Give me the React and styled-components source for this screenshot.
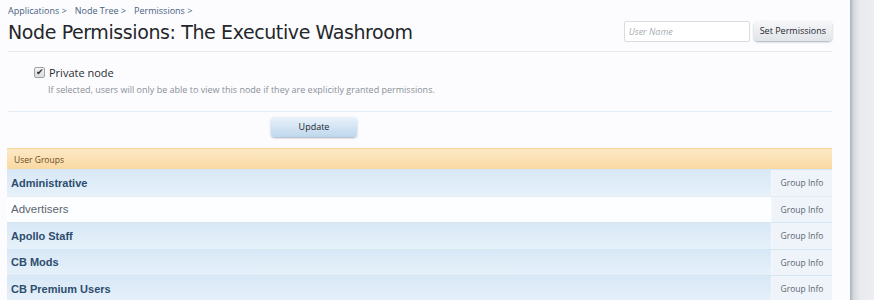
import React from 'react'
import styled, { createGlobalStyle } from 'styled-components'

const GlobalStyle = createGlobalStyle`
    body {
        margin: 0;
        background: #eceef1;
        font-family: "Open Sans", "Liberation Sans", sans-serif;
    }
`

const Page = styled.div`
    display: flex;
    width: 874px;
    height: 300px;
    overflow: hidden;
`

const Panel = styled.div`
    width: 824px;
    padding: 0 18px 0 8px;
    background: #fcfcfe;
`

const Side = styled.div`
    flex: 1;
    background: linear-gradient(to right, #a9b2bc 0px, #d6dbe0 4px, #e8eaed 10px, #eceef1 24px);
`

const Breadcrumb = styled.div`
    display: flex;
    gap: 8px;
    padding-top: 4px;
    font-size: 9px;
    color: #47617f;
    height: 14px;
`

const Header = styled.div`
    display: flex;
    justify-content: space-between;
    align-items: flex-start;
    border-bottom: 1px solid #e6e9ee;
    height: 33px;
`

const Title = styled.h1`
    margin: 3px 0 0;
    font-family: "DejaVu Sans", sans-serif;
    font-weight: normal;
    font-size: 19px;
    letter-spacing: -0.4px;
    color: #23272b;
`

const SearchForm = styled.div`
    display: flex;
    gap: 4px;
    margin-top: 3px;
`

const TextInput = styled.div`
    width: 120px;
    height: 19px;
    border: 1px solid #d8dde3;
    border-radius: 2px;
    background: #fff;
    font-size: 9px;
    font-style: italic;
    color: #a7adb5;
    padding-left: 4px;
    line-height: 19px;
`

const Button = styled.div`
    height: 20px;
    line-height: 20px;
    padding: 0 ${p => p.$pad || 6}px;
    width: ${p => p.$width || 'auto'};
    text-align: center;
    font-size: 9px;
    color: #1f2630;
    border-radius: 4px;
    background: ${p => p.$blue
        ? 'linear-gradient(to bottom, #e9f2fb, #bfd7ec)'
        : 'linear-gradient(to bottom, #f6f7f9, #e1e4e8)'};
    box-shadow: 0 1px 2px rgba(60, 80, 110, 0.45);
`

const OptionBlock = styled.div`
    padding: 13px 0 0 26px;
    height: 46px;
    border-bottom: 1px solid #e4eef6;
`

const CheckRow = styled.label`
    display: flex;
    align-items: center;
    gap: 4px;
    font-size: 11px;
    color: #2a2e33;
`

const Check = styled.span`
    position: relative;
    width: 9px;
    height: 9px;
    border: 1px solid #9ea3aa;
    border-radius: 2px;
    background: linear-gradient(to bottom, #f4f4f4, #dcdcdc);
    &::after {
        content: '✔';
        position: absolute;
        left: 1px;
        top: -3px;
        font-size: 9px;
        color: #2a2e33;
    }
`

const Hint = styled.div`
    margin: 3px 0 0 14px;
    font-size: 9px;
    color: #8a9098;
`

const SubmitBar = styled.div`
    display: flex;
    justify-content: center;
    padding: 5px 0 11px;
    width: 612px;
`

const Table = styled.div`
    margin-left: -1px;
`

const TableHead = styled.div`
    height: 21px;
    line-height: 21px;
    padding-left: 7px;
    font-size: 8.5px;
    color: #6b4a22;
    background: linear-gradient(to bottom, #fde9c6, #f9d9a2);
    border-top: 1px solid #f3d39a;
    box-sizing: border-box;
`

const Row = styled.div`
    display: flex;
    height: 26.5px;
    border-top: 1px solid ${p => p.$plain ? '#e6ebf0' : '#d5e5f2'};
    box-sizing: border-box;
`

const Name = styled.div`
    flex: 1;
    display: flex;
    align-items: center;
    padding-left: 4px;
    font-family: "Liberation Sans", Arial, sans-serif;
    font-size: ${p => p.$plain ? '11.5px' : '11px'};
    font-weight: ${p => p.$plain ? 'normal' : 'bold'};
    color: ${p => p.$plain ? '#5c6670' : '#2e4d6e'};
    background: ${p => p.$plain
        ? '#fdfeff'
        : 'linear-gradient(to bottom, #d8e8f6, #e6f1fa)'};
`

const Info = styled.div`
    width: 60px;
    display: flex;
    align-items: center;
    justify-content: center;
    font-size: 8.5px;
    color: #5c6670;
    background: #eef4fa;
    border-left: 1px solid #f4f8fc;
`

const groups = [
    { name: 'Administrative' },
    { name: 'Advertisers', plain: true },
    { name: 'Apollo Staff' },
    { name: 'CB Mods' },
    { name: 'CB Premium Users' },
]

export default function App() {
    return (
        <Page>
            <GlobalStyle />
            <Panel>
                <Breadcrumb>
                    <span>Applications &gt;</span>
                    <span>Node Tree &gt;</span>
                    <span>Permissions &gt;</span>
                </Breadcrumb>
                <Header>
                    <Title>Node Permissions: The Executive Washroom</Title>
                    <SearchForm>
                        <TextInput>User Name</TextInput>
                        <Button $pad={6}>Set Permissions</Button>
                    </SearchForm>
                </Header>
                <OptionBlock>
                    <CheckRow>
                        <Check />
                        Private node
                    </CheckRow>
                    <Hint>If selected, users will only be able to view this node if they are explicitly granted permissions.</Hint>
                </OptionBlock>
                <SubmitBar>
                    <Button $blue $width="74px">Update</Button>
                </SubmitBar>
                <Table>
                    <TableHead>User Groups</TableHead>
                    {groups.map(g => (
                        <Row key={g.name} $plain={g.plain}>
                            <Name $plain={g.plain}>{g.name}</Name>
                            <Info>Group Info</Info>
                        </Row>
                    ))}
                </Table>
            </Panel>
            <Side />
        </Page>
    )
}
